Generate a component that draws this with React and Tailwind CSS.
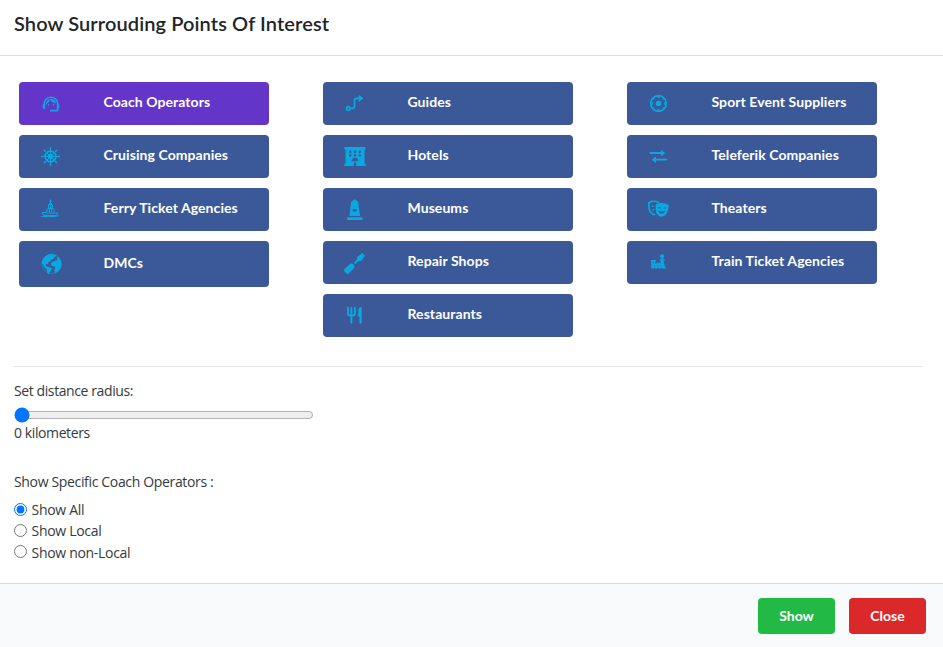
import { MdSupportAgent } from "react-icons/md";
import { FaHotel, FaScrewdriver } from "react-icons/fa";

function Glyph({ children }) {
  return (
    <svg viewBox="0 0 24 24" className="size-6" fill="none" stroke="currentColor">
      {children}
    </svg>
  );
}

function WheelIcon() {
  return (
    <Glyph>
      <circle cx="11.5" cy="11.5" r="5.4" strokeWidth="1.6" />
      <circle cx="11.5" cy="11.5" r="2.3" strokeWidth="0.9" />
      <path d="M11.5 2v19M2 11.5h19M5 5l13 13M18 5L5 18" strokeWidth="1" />
      <path d="M10.7 3h1.6M10.7 20h1.6M3 10.7v1.6M20 10.7v1.6M5 5l1.5 1.5M18 5l-1.5 1.5M5 18l1.5-1.5M18 18l-1.5-1.5" strokeWidth="1.6" />
    </Glyph>
  );
}

function FerryIcon() {
  return (
    <Glyph>
      <path d="M11.5 1.5v3.5M10.3 3.3h2.4" strokeWidth="1" />
      <path d="M11.5 4.500L14 7H9z" fill="currentColor" stroke="none" />
      <path d="M9.500 7v3.500M13.500 7v3.500M11.500 7v3.500M8.500 10.500h6M8 11v3.500M15 11v3.500M10.300 11v3.500M12.700 11v3.500" strokeWidth="1" />
      <path d="M3 14.500h4l1 .7h8.500l2.500-.3-2 2.600H5z" strokeWidth="1" />
      <path d="M2.300 18.500c2-.8 3 .5 5 0s3-.5 5 0 4-.5 7.700-.8" strokeWidth="1.100" />
    </Glyph>
  );
}

function GlobeIcon() {
  return (
    <Glyph>
      <circle cx="12.500" cy="12" r="9.500" strokeWidth="0.800" opacity="0.550" />
      <path d="M2.800 11.500C3 7 6 2.800 11 2l2.500-.5 1.200 1.300 2.300-.3.500 1.500-2 1-1 2-2.200.7-1.300 1.800-2 .8.500 2-1.500-.5-1.500 1.200.8 1.200 1.700.5 3.800 1.600-.5 2.200-1.600 1.500-.7 2.200-1.700-1-.3-3-1.500-2-1.500-1.300-.7-2.200z" fill="currentColor" stroke="none" />
      <path d="M18 5.500l1.500-.5c1.500 1.500 3 4 3 7 0 4.500-2.500 7.800-6.500 9.200l-.7-3 .9-2.700-1.400-1.300-2-.3-1-2.200 1.300-2 2.500-.5 1.200-1 1.700.3z" fill="currentColor" stroke="none" />
    </Glyph>
  );
}

function RouteIcon() {
  return (
    <Glyph>
      <circle cx="5.300" cy="16.500" r="1.800" strokeWidth="1.700" />
      <path d="M7.300 16.500h2a2.200 2.200 0 0 0 2.200-2.200V8.700a2.400 2.400 0 0 1 2.400-2.400H17" strokeWidth="1.700" />
      <path d="M15.700 2.700l4.700 3.600-4.700 3.600z" fill="currentColor" stroke="none" />
    </Glyph>
  );
}

function MonumentIcon() {
  return (
    <Glyph>
      <path
        fillRule="evenodd"
        d="M11.700 1.200l3.500 2.500L17 18H6.400L8.200 3.700zM10.300 11.200a.8.8 0 0 0-.8.8v.6c0 .5.400.8.800.8h2.800c.5 0 .8-.3.800-.8V12a.8.8 0 0 0-.8-.8z"
        fill="currentColor"
        stroke="none"
      />
      <rect x="4" y="19.200" width="15.500" height="2.800" rx="0.800" fill="currentColor" stroke="none" />
    </Glyph>
  );
}

function RestaurantIcon() {
  return (
    <Glyph>
      <path d="M4.900 3.800v5.400c0 1.300 1 2.300 2.300 2.300h2.400c1.300 0 2.300-1 2.300-2.300V3.800M8.400 3.800v15" strokeWidth="1.900" strokeLinecap="round" />
      <path d="M18.700 3v16c0 .5-.4.800-1.100.8s-1.100-.3-1.100-.8v-6.300h-1.200V6c0-1.700 1.300-3 3.400-3z" fill="currentColor" stroke="none" />
    </Glyph>
  );
}

function BallIcon() {
  return (
    <Glyph>
      <circle cx="11.500" cy="11.500" r="7.800" strokeWidth="1.700" />
      <circle cx="11.500" cy="11.500" r="2.800" fill="currentColor" stroke="none" />
      <path d="M10 5.200h3M5.200 10v3M17.800 10v3M10 17.800h3M6.300 7.300l1-1M15.700 6.300l1 1M6.300 15.700l1 1M15.700 16.700l1-1" strokeWidth="1.200" />
    </Glyph>
  );
}

function ArrowsIcon() {
  return (
    <Glyph>
      <path d="M2.700 8H15M8 14.700h12.300" strokeWidth="1.800" />
      <path d="M14 4.800L18.300 8 14 11.200zM9 11.500l-4.300 3.200L9 17.900z" fill="currentColor" stroke="none" />
    </Glyph>
  );
}

function MasksIcon() {
  return (
    <Glyph>
      <path d="M11.300 4.300C8.500 2.800 5.300 3 2 4.600c-.5 4-.2 8 2.300 10.400.9.900 2 1.500 3.200 1.700" strokeWidth="1.700" strokeLinecap="round" />
      <path d="M4.500 8.500l2-.500M5.300 12.500c.6-.7 1.200-1 2-1.100" strokeWidth="1.400" />
      <path
        d="M8.900 6.400c1.500-.9 3.800-1.500 6.200-1.300 2.500.1 4.800.8 6.700 2-.3 5.500-1.800 11.200-7.300 11.700C9.300 18.500 7.900 12 8.900 6.400z"
        fill="currentColor"
        stroke="none"
      />
      <path d="M11.200 10.200c.8-.8 1.700-.8 2.500 0M16.500 10.400c.8-.8 1.700-.8 2.500 0" stroke="#3b5998" strokeWidth="1.100" />
      <path d="M11.200 12.700c2.200 1 4.700 1 7 0-.7 3.600-6 4-7 0z" fill="#3b5998" stroke="none" />
    </Glyph>
  );
}

function TrainIcon() {
  return (
    <Glyph>
      <path
        d="M4 9h4.700v1.700h-.4v1.800h1.400v-1h1.200v1h.8v-1h1.300v1h.6V9.500h-.9V8.200h1.600V6.300h-1.500V4.200h1.500V3.300h2v1h.9v2.200h-1v1.700h1.500v1.300h-1v3.300h.8v2l2 2.700h-4.200l-.8-.8-.8.800h-1.600l-.8-.8-.8.800H8.300l-.8-.8-.8.800H4.300z"
        fill="currentColor"
        stroke="none"
      />
      <path d="M5.500 11.300h1.300M10.300 15h.8M7 15h.8M13.300 15h.8" stroke="#3b5998" strokeWidth="1" />
    </Glyph>
  );
}

const columns = [
  [
    { label: "Coach Operators", icon: <MdSupportAgent className="mr-px size-5" />, active: true },
    { label: "Cruising Companies", icon: <WheelIcon /> },
    { label: "Ferry Ticket Agencies", icon: <FerryIcon /> },
    { label: "DMCs", icon: <GlobeIcon />, tall: true },
  ],
  [
    { label: "Guides", icon: <RouteIcon /> },
    { label: "Hotels", icon: <FaHotel className="mr-px mb-px h-[19px] w-[22px]" /> },
    { label: "Museums", icon: <MonumentIcon /> },
    { label: "Repair Shops", icon: <FaScrewdriver className="mr-px size-[21px]" /> },
    { label: "Restaurants", icon: <RestaurantIcon /> },
  ],
  [
    { label: "Sport Event Suppliers", icon: <BallIcon /> },
    { label: "Teleferik Companies", icon: <ArrowsIcon /> },
    { label: "Theaters", icon: <MasksIcon /> },
    { label: "Train Ticket Agencies", icon: <TrainIcon /> },
  ],
];

function CategoryButton({ label, icon, active, tall }) {
  return (
    <button
      className={`flex w-[250px] items-start rounded pl-5 text-left ${tall ? "h-[46px] pt-[11px]" : "h-[43px] pt-[10px]"} ${active ? "bg-[#6435c9]" : "bg-[#3b5998]"}`}
    >
      <span className="flex size-6 items-center justify-center text-[#08a9e0]">{icon}</span>
      <span className={`ml-[40.5px] text-sm leading-5 font-bold tracking-[0.07px] whitespace-nowrap text-white ${tall ? "pt-px" : ""}`}>{label}</span>
    </button>
  );
}

function Radio({ label, checked }) {
  return (
    <label className="flex h-[21.3px] items-center">
      <input type="radio" name="scope" defaultChecked={checked} className="mb-px size-[13px] accent-[#0075ff]" />
      <span className="ml-[4.5px] tracking-[-0.3px]">{label}</span>
    </label>
  );
}

export default function App() {
  return (
    <div className="flex h-[647px] w-[943px] flex-col overflow-hidden bg-white font-['Lato',sans-serif]">
      <header className="h-14 border-b border-[#dcdddd] pt-[9px] pl-[14px]">
        <h1 className="text-xl leading-7 font-semibold tracking-[0.1px] text-[#212529]">Show Surrouding Points Of Interest</h1>
      </header>
      <main className="flex-1 pr-[21px] pl-[14px] text-[#212529]">
        <div className="flex h-[311px] gap-[54px] border-b border-[#e3e4e5] pt-[26px] pl-[5px]">
          {columns.map((items) => (
            <div key={items[0].label} className="flex flex-col gap-[10px]">
              {items.map((item) => (
                <CategoryButton key={item.label} {...item} />
              ))}
            </div>
          ))}
        </div>
        <div className="font-['Open_Sans',sans-serif] text-sm leading-[21px] text-[#343a40]">
          <p className="mt-[13px] tracking-[-0.4px]">Set distance radius:</p>
          <input type="range" min="0" max="100" defaultValue="0" className="mt-[6px] block h-4 w-[300px] accent-[#0075ff]" />
          <p className="-mt-px tracking-[-0.4px]">0 kilometers</p>
          <p className="mt-7 mb-[7px] tracking-[-0.34px]">Show Specific Coach Operators :</p>
          <Radio label="Show All" checked />
          <Radio label="Show Local" />
          <Radio label="Show non-Local" />
        </div>
      </main>
      <footer className="flex h-16 gap-[14px] border-t border-[#d9dadb] bg-[#f9fafb] pt-[14px] pr-[17px] text-sm font-bold text-white">
        <button className="ml-auto h-9 w-[77px] rounded bg-[#21ba45]">Show</button>
        <button className="h-9 w-[77px] rounded bg-[#db2828]">Close</button>
      </footer>
    </div>
  );
}
